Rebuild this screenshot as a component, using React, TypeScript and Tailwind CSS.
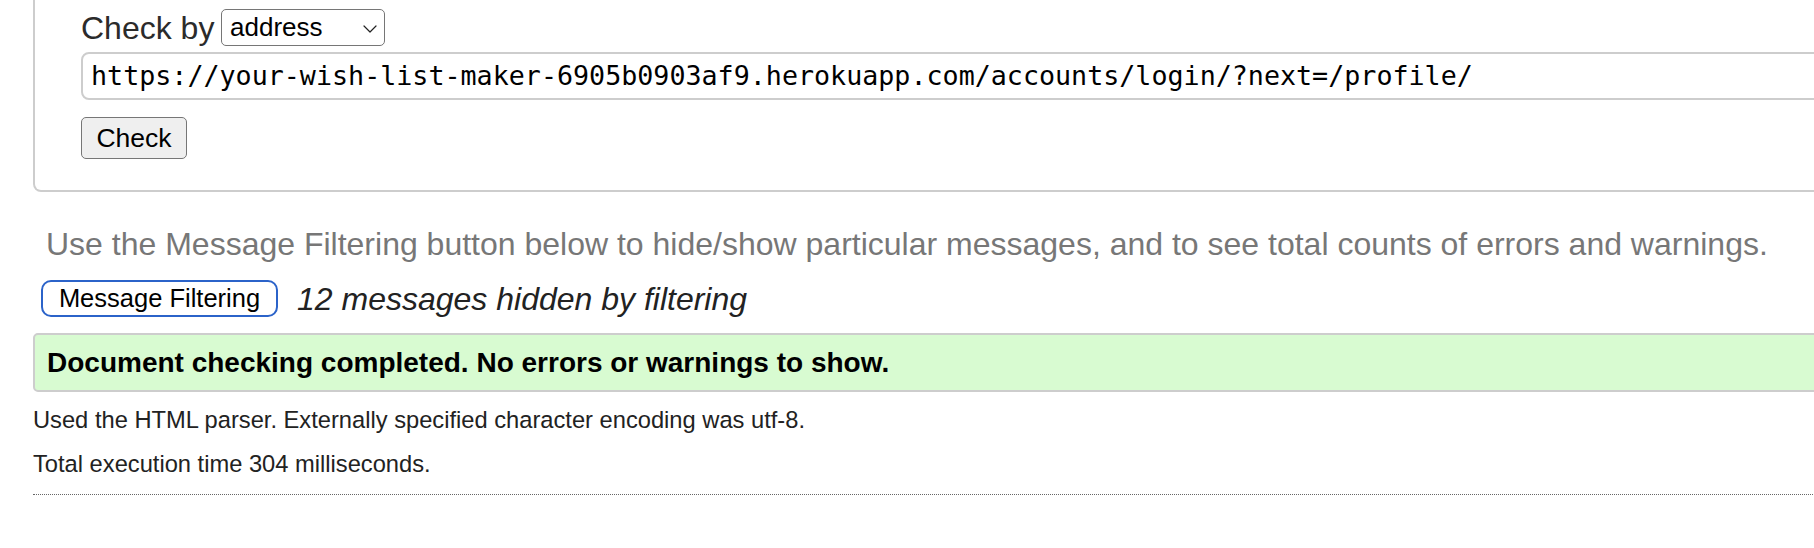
import React from 'react';

const sans = "font-['Liberation_Sans',Arial,sans-serif]";

function Chevron() {
  return (
    <svg width="14" height="8" viewBox="0 0 14 8" fill="none" className="absolute left-[141px] top-[15px]">
      <path d="M1 1 L7 7 L13 1" stroke="#222" strokeWidth="1.2" strokeLinecap="round" strokeLinejoin="round" />
    </svg>
  );
}

export default function App() {
  return (
    <div className={`${sans} w-[1814px] h-[548px] overflow-hidden bg-white text-[#222]`}>
      {/* Check form fieldset (top edge scrolled out of view) */}
      <div className="ml-[33px] w-[1900px] h-[192px] border-2 border-t-0 border-[#cdcdcd] rounded-b-[8px] pl-[46px] pt-[9px]">
        <div className="flex items-center h-[37px]">
          <span className="w-[140px] text-[32px] leading-none text-[#2b2b2b]">Check by</span>
          <div className="relative w-[164px] h-[37px] border-[1.5px] border-[#767676] rounded-[5px] bg-white pl-[8px] flex items-center text-[26px] text-black">
            address
            <Chevron />
          </div>
        </div>
        <div className="mt-[6px] h-[48px] border-2 border-[#cdcdcd] rounded-[8px] pl-[8px] flex items-center font-['DejaVu_Sans_Mono',Menlo,monospace] text-[26.7px] text-black whitespace-nowrap">
          https://your-wish-list-maker-6905b0903af9.herokuapp.com/accounts/login/?next=/profile/
        </div>
        <button className="mt-[17px] w-[106px] h-[42px] bg-[#efefef] border-[1.5px] border-[#767676] rounded-[5px] text-[26.5px] text-black leading-none flex items-center justify-center">
          Check
        </button>
      </div>

      <p className="mt-[36px] ml-[46px] text-[32px] leading-[32px] text-[#777] whitespace-nowrap">
        Use the Message Filtering button below to hide/show particular messages, and to see total counts of errors and warnings.
      </p>

      <div className="mt-[20px] ml-[41px] flex items-center">
        <button className="w-[237px] h-[37px] border-[2.5px] border-[#2b63c9] rounded-[10px] bg-white text-[25.5px] text-black leading-none flex items-center justify-center">
          Message Filtering
        </button>
        <span className="ml-[19px] text-[32px] italic leading-none text-[#222]">12 messages hidden by filtering</span>
      </div>

      <div className="mt-[16px] ml-[33px] w-[1900px] h-[59px] border-2 border-[#cdcdcd] rounded-[5px] bg-[#d8fbd1] pl-[12px] flex items-center">
        <span className="text-[28px] font-bold text-black">Document checking completed. No errors or warnings to show.</span>
      </div>

      <p className="mt-[13px] ml-[33px] text-[23.7px] leading-[30px] text-[#222]">
        Used the HTML parser. Externally specified character encoding was utf-8.
      </p>
      <p className="mt-[14px] ml-[33px] text-[23.7px] leading-[30px] text-[#222]">
        Total execution time 304 milliseconds.
      </p>
      <div className="mt-[15px] ml-[33px] w-[1900px] border-t border-dotted border-[#666]" />
    </div>
  );
}
